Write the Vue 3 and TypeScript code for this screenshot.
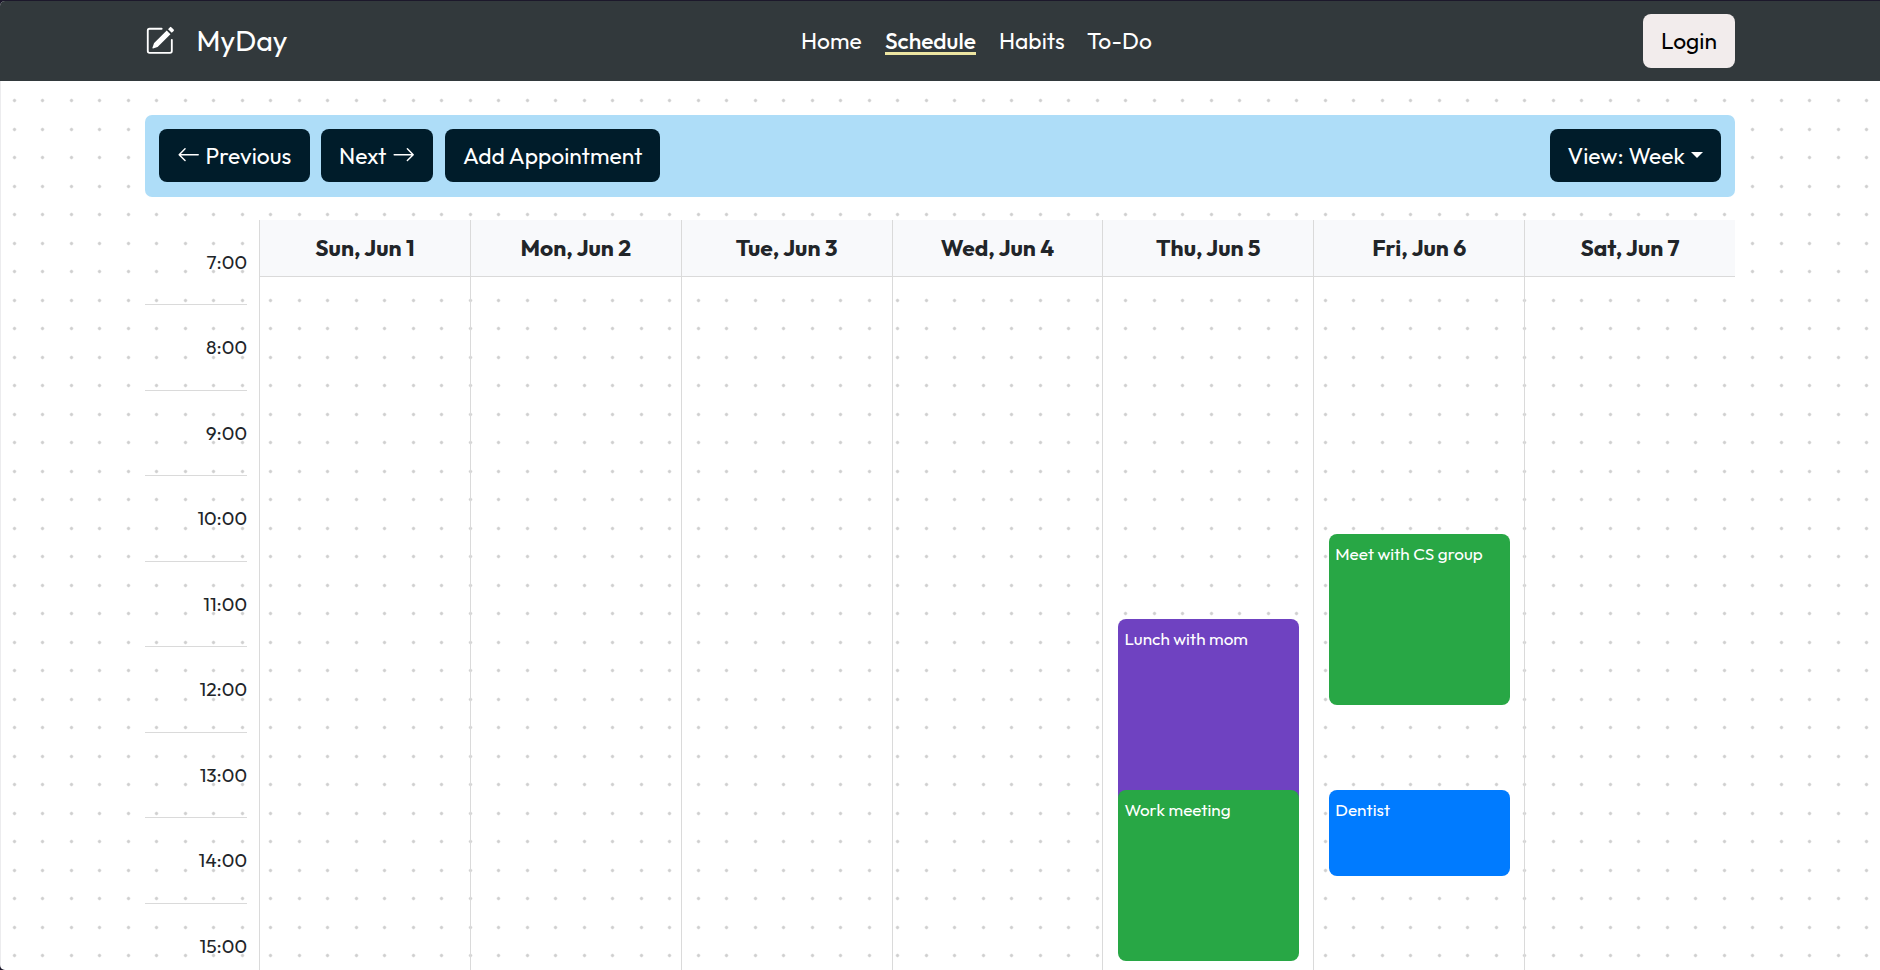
<script setup lang="ts">
interface NavLink { label: string; key: string; active?: boolean }
interface Appointment { title: string; start: number; hours: number; tone: string; key: string }
interface Day { label: string; appointments: Appointment[] }

const HOUR_HEIGHT = 85.5
const FIRST_HOUR = 7

const links: NavLink[] = [
  { label: 'Home', key: 'home' },
  { label: 'Schedule', key: 'schedule', active: true },
  { label: 'Habits', key: 'habits' },
  { label: 'To-Do', key: 'todo' },
]

const hours: string[] = Array.from({ length: 9 }, (_, i) => `${FIRST_HOUR + i}:00`)

const days: Day[] = [
  { label: 'Sun, Jun 1', appointments: [] },
  { label: 'Mon, Jun 2', appointments: [] },
  { label: 'Tue, Jun 3', appointments: [] },
  { label: 'Wed, Jun 4', appointments: [] },
  {
    label: 'Thu, Jun 5',
    appointments: [
      { title: 'Lunch with mom', start: 11, hours: 2.5, tone: 'purple', key: 'lunch' },
      { title: 'Work meeting', start: 13, hours: 2, tone: 'green', key: 'work' },
    ],
  },
  {
    label: 'Fri, Jun 6',
    appointments: [
      { title: 'Meet with CS group', start: 10, hours: 2, tone: 'green', key: 'group' },
      { title: 'Dentist', start: 13, hours: 1, tone: 'blue', key: 'dentist' },
    ],
  },
  { label: 'Sat, Jun 7', appointments: [] },
]

const placement = (a: Appointment) => ({
  top: `${(a.start - FIRST_HOUR) * HOUR_HEIGHT}px`,
  height: `${a.hours * HOUR_HEIGHT}px`,
})
</script>

<template>
  <div class="window">
    <div class="page">
      <header class="navbar">
        <a class="brand">
          <svg class="brand-icon" viewBox="0 0 16 16" fill="currentColor">
            <path d="M15.502 1.94a.5.5 0 0 1 0 .706L14.459 3.69l-2-2L13.502.646a.5.5 0 0 1 .707 0l1.293 1.293zm-1.75 2.456-2-2L4.939 9.21a.5.5 0 0 0-.121.196l-.805 2.414a.25.25 0 0 0 .316.316l2.414-.805a.5.5 0 0 0 .196-.12l6.813-6.814z" />
            <path fill-rule="evenodd" d="M1 13.5A1.5 1.5 0 0 0 2.5 15h11a1.5 1.5 0 0 0 1.5-1.5v-6a.5.5 0 0 0-1 0v6a.5.5 0 0 1-.5.5h-11a.5.5 0 0 1-.5-.5v-11a.5.5 0 0 1 .5-.5H9a.5.5 0 0 0 0-1H2.5A1.5 1.5 0 0 0 1 2.5z" />
          </svg>
          <span class="brand-name">MyDay</span>
        </a>
        <nav class="links">
          <a v-for="link in links" :key="link.key" class="link" :class="[link.key, { active: link.active }]">{{ link.label }}</a>
        </nav>
        <button class="login">Login</button>
      </header>

      <main class="content">
        <div class="toolbar">
          <button class="btn previous">
            <svg class="arrow" viewBox="0 0 16 16" fill="currentColor">
              <path fill-rule="evenodd" d="M15 8a.5.5 0 0 0-.5-.5H2.707l3.147-3.146a.5.5 0 1 0-.708-.708l-4 4a.5.5 0 0 0 0 .708l4 4a.5.5 0 0 0 .708-.708L2.707 8.5H14.5A.5.5 0 0 0 15 8" />
            </svg>
            <span>Previous</span>
          </button>
          <button class="btn next">
            <span>Next</span>
            <svg class="arrow" viewBox="0 0 16 16" fill="currentColor">
              <path fill-rule="evenodd" d="M1 8a.5.5 0 0 1 .5-.5h11.793l-3.147-3.146a.5.5 0 0 1 .708-.708l4 4a.5.5 0 0 1 0 .708l-4 4a.5.5 0 0 1-.708-.708L13.293 8.5H1.5A.5.5 0 0 1 1 8" />
            </svg>
          </button>
          <button class="btn add"><span>Add Appointment</span></button>
          <button class="btn view"><span>View: Week</span><i class="caret"></i></button>
        </div>

        <div class="calendar">
          <div class="times">
            <div v-for="hour in hours" :key="hour" class="time">{{ hour }}</div>
          </div>
          <div class="days">
            <section v-for="day in days" :key="day.label" class="day">
              <h2 class="day-name">{{ day.label }}</h2>
              <div class="slots">
                <article
                  v-for="a in day.appointments"
                  :key="a.key"
                  class="appointment"
                  :class="a.tone"
                  :style="placement(a)"
                >{{ a.title }}</article>
              </div>
            </section>
          </div>
        </div>
      </main>
    </div>
  </div>
</template>

<style>
body { margin: 0; overflow: hidden; }
</style>

<style scoped>
* { box-sizing: border-box; }

.window {
  height: 970px;
  padding-top: 1px;
  background: #1c182b;
  font-family: Outfit, Lato, "Open Sans", sans-serif;
  color: #212529;
  overflow: hidden;
}

.page {
  height: 969px;
  border-radius: 5px 0 0 5px;
  overflow: hidden;
  background-color: #fff;
  background-image:
    linear-gradient(90deg, #ececee 1px, transparent 1px),
    radial-gradient(circle at 14.5px 14.5px, #cfcfcf 0.9px, transparent 2.3px),
    radial-gradient(circle at 42.5px 14.5px, #cfcfcf 0.9px, transparent 2.3px),
    radial-gradient(circle at 14.5px 42.5px, #cfcfcf 0.9px, transparent 2.3px),
    radial-gradient(circle at 42.5px 42.5px, #cfcfcf 0.9px, transparent 2.3px);
  background-size: 100% 100%, 57px 57px, 57px 57px, 57px 57px, 57px 57px;
  background-repeat: no-repeat, repeat, repeat, repeat, repeat;
}

.navbar {
  height: 80px;
  padding: 0 145px;
  display: flex;
  justify-content: space-between;
  align-items: center;
  background: #32393c;
  color: #fff;
}

.brand { width: 166px; padding-bottom: 1px; display: flex; align-items: center; }
.brand-icon { width: 29.6px; height: 29.6px; margin-right: 22px; }
.brand-name { font-size: 28.5px; line-height: 38px; margin-bottom: 1px; }

.links { display: flex; gap: 23px; font-size: 22.8px; line-height: 28px; }
.link { white-space: nowrap; }
.home { width: 61px; }
.schedule { width: 91px; }
.habits { width: 65px; }
.todo { width: 66px; }
.active { font-weight: 500; box-shadow: inset 0 -3px #ede5a2; }

.login {
  width: 92px;
  height: 54px;
  padding: 0 0 2px;
  border: 0;
  border-radius: 8px;
  background: #f2ecec;
  color: #000;
  font: inherit;
  font-size: 22.8px;
}

.content { padding: 34px 145px 0; }

.toolbar {
  height: 82px;
  margin-bottom: 23px;
  padding: 14px 14px 0;
  display: flex;
  align-items: flex-start;
  border-radius: 7px;
  background: #aeddf8;
}

.btn {
  height: 53px;
  padding: 0 17px 0 18px;
  display: flex;
  align-items: center;
  border: 0;
  border-radius: 8px;
  background: #001c2a;
  color: #fff;
  font: inherit;
  font-size: 22.8px;
  white-space: nowrap;
}
.previous { width: 151px; margin-right: 11px; gap: 5px; }
.next { width: 112px; margin-right: 12px; gap: 6px; }
.add { width: 215px; }
.view { width: 171px; margin-left: auto; padding-left: 17.5px; gap: 6.5px; }
.arrow { flex: none; width: 23.4px; height: 23.4px; margin-bottom: 2px; }
.caret {
  border: 6.4px solid transparent;
  border-top-color: #fff;
  border-bottom: 0;
  margin-bottom: 1px;
}

.calendar { display: flex; gap: 12px; }
.times { width: 102px; flex: none; margin-top: -0.4px; }
.time {
  height: 85.5px;
  display: flex;
  align-items: center;
  justify-content: flex-end;
  border-bottom: 1px solid #dadada;
  font-size: 19.2px;
}

.days { flex: 1; display: grid; grid-template-columns: repeat(7, 1fr); }
.day { border-left: 1px solid #dadada; }
.day-name {
  height: 57px;
  margin: 0;
  border-bottom: 1px solid #dadada;
  background: #f8f9fb;
  font-size: 22.8px;
  line-height: 55px;
  font-weight: 700;
  text-align: center;
}
.slots { position: relative; height: 770px; }
.appointment {
  position: absolute;
  left: 15px;
  width: 181px;
  padding: 7px 6px;
  border-radius: 8px;
  color: #fff;
  font-size: 17.1px;
  line-height: 26px;
  white-space: nowrap;
}
.green { background: #28a745; }
.purple { background: #6f42c1; }
.blue { background: #007bff; }
</style>
